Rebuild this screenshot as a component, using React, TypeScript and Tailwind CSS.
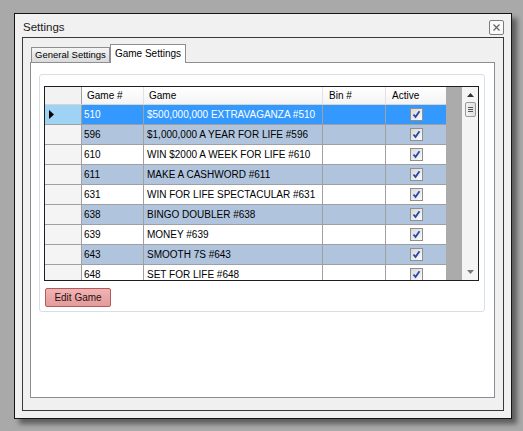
import React from "react";

type GameRow = { num: string; name: string; bin: string; active: boolean };

const GAMES: GameRow[] = [
  { num: "510", name: "$500,000,000 EXTRAVAGANZA #510", bin: "", active: true },
  { num: "596", name: "$1,000,000 A YEAR FOR LIFE #596", bin: "", active: true },
  { num: "610", name: "WIN $2000 A WEEK FOR LIFE #610", bin: "", active: true },
  { num: "611", name: "MAKE A CASHWORD #611", bin: "", active: true },
  { num: "631", name: "WIN FOR LIFE SPECTACULAR #631", bin: "", active: true },
  { num: "638", name: "BINGO DOUBLER #638", bin: "", active: true },
  { num: "639", name: "MONEY #639", bin: "", active: true },
  { num: "643", name: "SMOOTH 7S #643", bin: "", active: true },
  { num: "648", name: "SET FOR LIFE #648", bin: "", active: true },
];

function rowClass(index: number): string {
  if (index === 0) return "bg-[#3399ff] text-white";
  return index % 2 === 1 ? "bg-[#b0c4de] text-black" : "bg-white text-black";
}

function CheckCell() {
  return (
    <div className="flex h-[13px] w-[13px] items-center justify-center border border-[#8e8f8f] bg-gradient-to-br from-[#d8d8d8] to-[#fbfbfb]">
      <svg width="9" height="9" viewBox="0 0 9 9">
        <path d="M1.5 4.5 L3.5 7 L7.5 1.2" fill="none" stroke="#2846a8" strokeWidth="1.8" />
      </svg>
    </div>
  );
}

function GameGrid() {
  return (
    <div className="flex h-[195px] w-[435px] overflow-hidden border border-[#1e1e1e] bg-[#ababab]">
      <div className="flex w-[401px] flex-col">
        <div className="flex h-[18px] shrink-0 border-b border-[#d5d5d5] bg-gradient-to-b from-white to-[#f4f4f4] text-[10px] leading-[17px] text-black">
          <div className="w-[37px] border-r border-[#a0a0a0] bg-[#f2f2f2]" />
          <div className="w-[62px] border-r border-[#e2e2e2] pl-[5px]">Game #</div>
          <div className="w-[179px] border-r border-[#e2e2e2] pl-[5px]">Game</div>
          <div className="w-[63px] border-r border-[#e2e2e2] pl-[6px]">Bin #</div>
          <div className="w-[60px] pl-[6px]">Active</div>
        </div>
        {GAMES.map((g, i) => (
          <div key={g.num} className="flex h-[20px] shrink-0 text-[10px] leading-[19px]">
            <div
              className={`flex w-[37px] items-center border-r border-b border-[#a0a0a0] pl-[4px] ${
                i === 0 ? "bg-[#9fd3f5]" : "bg-[#f4f4f4]"
              }`}
            >
              {i === 0 && (
                <svg width="5" height="9" viewBox="0 0 5 9">
                  <path d="M0 0 L5 4.5 L0 9 Z" fill="#000" />
                </svg>
              )}
            </div>
            <div className={`w-[62px] border-r border-b border-[#a0a0a0] pl-[2px] ${rowClass(i)}`}>{g.num}</div>
            <div className={`w-[179px] border-r border-b border-[#a0a0a0] pl-[3px] ${rowClass(i)}`}>{g.name}</div>
            <div className={`w-[63px] border-r border-b border-[#a0a0a0] pl-[3px] ${rowClass(i)}`}>{g.bin}</div>
            <div className={`flex w-[60px] items-center justify-center border-b border-[#a0a0a0] ${rowClass(i)}`}>
              {g.active && <CheckCell />}
            </div>
          </div>
        ))}
      </div>
      <div className="w-[16px] bg-[#ababab]" />
      <div className="flex w-[16px] flex-col items-center bg-[#f4f4f4]">
        <svg className="mt-[6px]" width="7" height="4" viewBox="0 0 7 4">
          <path d="M0 4 L3.5 0 L7 4 Z" fill="#333" />
        </svg>
        <div className="mt-[5px] flex h-[15px] w-[11px] flex-col items-center justify-center gap-[1px] rounded-[2px] border border-[#9a9a9a] bg-gradient-to-r from-[#f2f2f2] to-[#e0e0e0]">
          <div className="h-px w-[5px] bg-[#555]" />
          <div className="h-px w-[5px] bg-[#555]" />
          <div className="h-px w-[5px] bg-[#555]" />
        </div>
        <div className="flex-1" />
        <svg className="mb-[6px]" width="7" height="4" viewBox="0 0 7 4">
          <path d="M0 0 L3.5 4 L7 0 Z" fill="#777" />
        </svg>
      </div>
    </div>
  );
}

export default function App() {
  return (
    <div className="h-[431px] w-[523px] overflow-hidden bg-[#a9a9a9] pt-[13px] pl-[14px] font-['Liberation_Sans',Arial,sans-serif]">
      <div className="flex h-[406px] w-[498px] flex-col border border-[#151515] bg-[#f1f1f1] px-[7px] pb-[7px] shadow-[5px_5px_5px_rgba(0,0,0,0.45)]">
        <div className="flex h-[23px] shrink-0 items-start justify-between">
          <span className="mt-[6px] ml-[1px] text-[11.5px] leading-[14px] text-[#1a1a1a]">Settings</span>
          <div className="mt-[6px] flex h-[15px] w-[15px] items-center justify-center rounded-[2px] border border-[#7c7c7c] bg-[#fafafa]">
            <svg width="7" height="7" viewBox="0 0 7 7">
              <path d="M0.5 0.5 L6.5 6.5 M6.5 0.5 L0.5 6.5" stroke="#666" strokeWidth="1.3" />
            </svg>
          </div>
        </div>
        <div className="flex flex-1 flex-col border border-[#383838] bg-[#f0f0f0] pt-[6px] pr-[8px] pb-[12px] pl-[7px]">
          <div className="flex h-[18px] shrink-0 items-end pl-[1px] text-[9.5px] text-black">
            <div className="flex h-[15px] w-[79px] items-center justify-center border border-b-0 border-[#8c8e94] bg-gradient-to-b from-[#f5f5f5] to-[#dadada]">
              General Settings
            </div>
            <div className="relative z-10 -mb-px flex h-[19px] w-[76px] items-center justify-center border border-b-0 border-[#8c8e94] bg-white pb-[2px] text-[10px]">
              Game Settings
            </div>
          </div>
          <div className="flex-1 border border-[#8c8e94] bg-white pt-[11px] pr-[9px] pl-[8px]">
            <div className="flex h-[238px] flex-col rounded-[3px] border border-[#d5dfe5] pt-[11px] pr-[5px] pl-[4px]">
              <GameGrid />
              <button className="mt-[7px] ml-[1px] h-[19px] w-[66px] rounded-[2px] border border-[#b45a5a] bg-gradient-to-b from-[#f0b4b4] to-[#e49a9a] text-[10px] leading-[16px] text-[#2a1010]">
                Edit Game
              </button>
            </div>
          </div>
        </div>
      </div>
    </div>
  );
}
